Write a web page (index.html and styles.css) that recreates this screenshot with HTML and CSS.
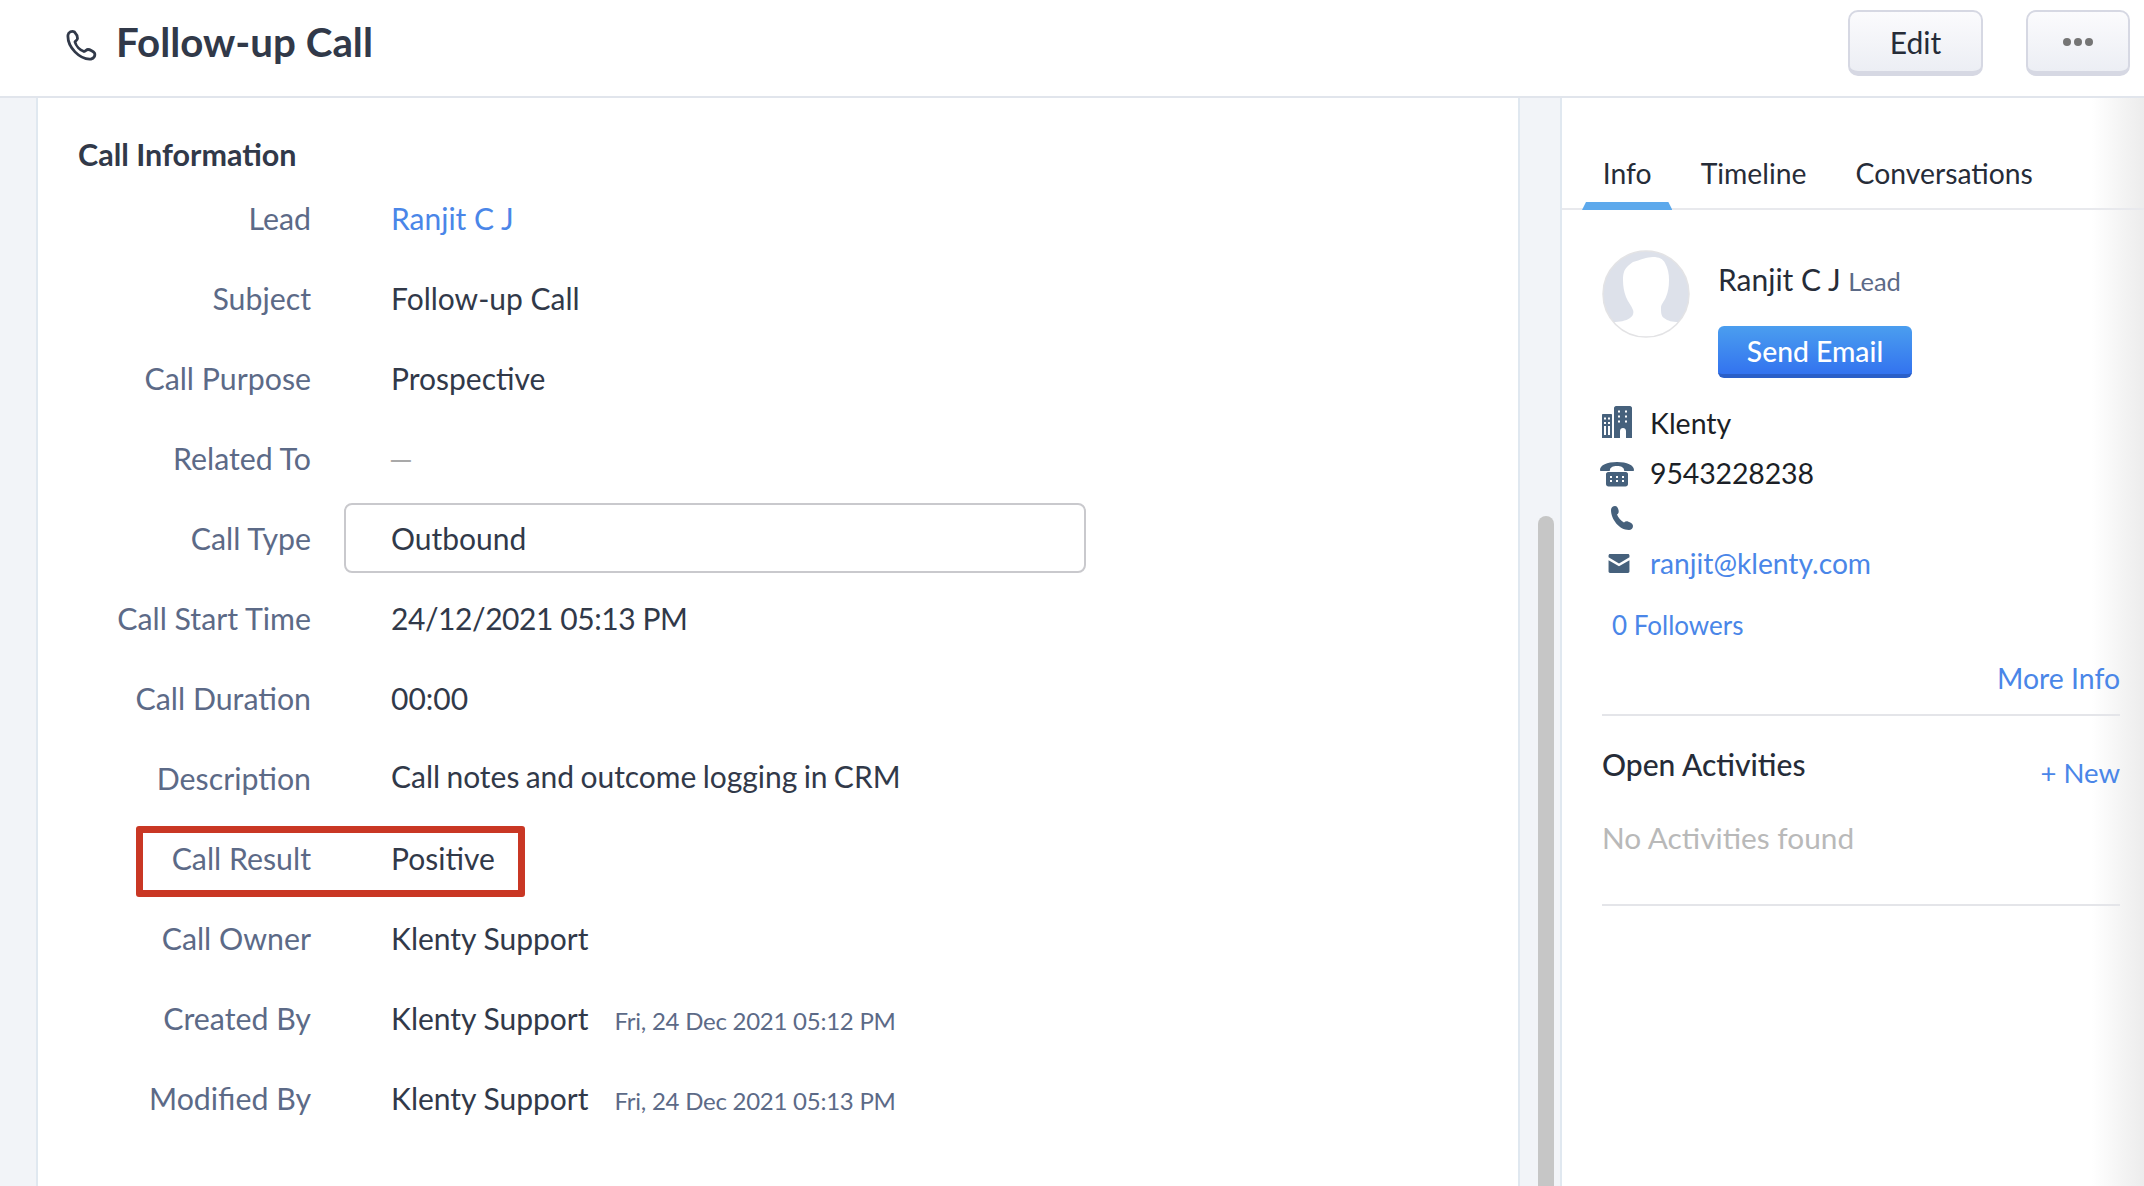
FILE: index.html
```html
<!DOCTYPE html>
<html lang="en">
<head>
<meta charset="utf-8">
<title>Follow-up Call</title>
<link rel="stylesheet" href="styles.css">
</head>
<body>
<header class="topbar">
  <div class="title-wrap">
    <svg class="title-icon" viewBox="0 0 32 32" aria-hidden="true"><path d="M3 6C3.500 3 7 1.500 9.500 3C11 4.500 12.500 8 12.500 9.500C12.500 11 10.500 12 10 13C11 17 15 21 19 22.500C20.500 22 21.500 20.500 23 20.500C25 20.500 28.500 22.500 29.500 24C30.500 26.500 29 29.500 26 30C15 31 2 18 3 6Z"/></svg>
    <h1 class="title">Follow-up Call</h1>
  </div>
  <div class="actions">
    <button class="btn btn-edit">Edit</button>
    <button class="btn btn-more" aria-label="More"><span class="dot"></span><span class="dot"></span><span class="dot"></span></button>
  </div>
</header>
<div class="content">
  <div class="gutter-left"></div>
  <main class="card">
    <h2 class="section-title">Call Information</h2>
    <div class="row"><div class="label">Lead</div><div class="value"><a class="link">Ranjit C J</a></div></div>
    <div class="row"><div class="label">Subject</div><div class="value">Follow-up Call</div></div>
    <div class="row"><div class="label">Call Purpose</div><div class="value">Prospective</div></div>
    <div class="row"><div class="label">Related To</div><div class="value value-empty">—</div></div>
    <div class="row"><div class="label">Call Type</div><div class="value value-box">Outbound</div></div>
    <div class="row"><div class="label">Call Start Time</div><div class="value value-num">24/12/2021 05:13 PM</div></div>
    <div class="row"><div class="label">Call Duration</div><div class="value">00:00</div></div>
    <div class="row"><div class="label">Description</div><div class="value value-raised">Call notes and outcome logging in CRM</div></div>
    <div class="row row-marked"><div class="label">Call Result</div><div class="value">Positive</div><div class="marker"></div></div>
    <div class="row"><div class="label">Call Owner</div><div class="value">Klenty Support</div></div>
    <div class="row"><div class="label">Created By</div><div class="value">Klenty Support<span class="stamp">Fri, 24 Dec 2021 05:12 PM</span></div></div>
    <div class="row"><div class="label">Modified By</div><div class="value">Klenty Support<span class="stamp">Fri, 24 Dec 2021 05:13 PM</span></div></div>
  </main>
  <div class="gutter-mid"><div class="scroll-thumb"></div></div>
  <aside class="side">
    <nav class="tabs">
      <a class="tab tab-active">Info</a>
      <a class="tab">Timeline</a>
      <a class="tab">Conversations</a>
    </nav>
    <section class="profile">
      <svg class="avatar" viewBox="0 0 88 88" aria-hidden="true">
        <circle cx="44" cy="44" r="43" fill="#dde1ea"/>
        <path fill="#fff" d="M31 12C38 10 45 7 51 7C57 7 61 9 63 13C66 18 67 24 67 30C67 37 66 42 64 47C62 52 59 54 59 58C59 62 59 66 62 68C66 71 70 72 76.600 72A43 43 0 0 1 11.400 72C17 72 24 71 28 68C31 66 32 63 31 60C29 55 26 52 24 47C22 42 21 36 21 30C21 24 22 20 25 17C27 15 29 13 31 12Z"/>
        <circle cx="44" cy="44" r="43" fill="none" stroke="#e3e3e5" stroke-width="1.500"/>
      </svg>
      <div class="profile-body">
        <div class="name">Ranjit C J <span class="name-tag">Lead</span></div>
        <button class="btn-primary">Send Email</button>
      </div>
    </section>
    <ul class="contacts">
      <li class="contact contact-first">
        <span class="icon-slot"><svg class="icon icon-building" viewBox="0 0 30 32" aria-hidden="true"><path d="M0 9c0-.6.400-1 1-1h8c.6 0 1 .4 1 1v23H0zM12 2c0-1 1-2 2-2h14c1 0 2 1 2 2v30h-6V25c0-1.700-1.300-3-3-3s-3 1.300-3 3v7h-6z"/><path fill="#fff" d="M2 11.500h2v2H2zM6 11.500h2v2H6zM2 16h2v2H2zM6 16h2v2H6zM2 20h2v9H2zM6 20h2v9H6zM16 4.500h2v2h-2zM23 4.500h2v2h-2zM16 9.500h2v2h-2zM23 9.500h2v2h-2zM16 14.500h2v2h-2zM23 14.500h2v2h-2z"/></svg></span>
        <span>Klenty</span>
      </li>
      <li class="contact">
        <span class="icon-slot"><svg class="icon icon-landline" viewBox="0 0 34 25" aria-hidden="true"><path d="M0 8C0 3 7 0 17 0S34 3 34 8c0 .6-.4 1-1 1h-8c-.6 0-1-.4-1-1 0-2.500-3-4-7-4s-7 1.500-7 4c0 .6-.4 1-1 1H1C.4 9 0 8.600 0 8z"/><path fill-rule="evenodd" d="M8 10h18c1 0 2 1 2 2v10c0 1.500-1 2.500-2.500 2.500h-17C7 24.500 6 23.500 6 22V12c0-1 1-2 2-2zM10 14v2h2v-2zM16 14v2h2v-2zM22 14v2h2v-2zM10 18v2h2v-2zM16 18v2h2v-2zM22 18v2h2v-2z"/></svg></span>
        <span class="digits">9543228238</span>
      </li>
      <li class="contact">
        <span class="icon-slot"><svg class="icon icon-phone" viewBox="0 0 24 24" aria-hidden="true"><path d="M1 4C1 1.500 3 0 5 0C7 0 8 2 8.500 4C9 6 8.500 7.500 7 8.500C8 11.500 11 15 14 16.500C15 15.500 16.500 15 18 15.500C20.500 16.500 23 17.500 23 20C23 22.500 21 24 19 24C9 24 1 13 1 4Z"/></svg></span>
      </li>
      <li class="contact">
        <span class="icon-slot"><svg class="icon icon-mail" viewBox="0 0 22 20" aria-hidden="true"><path d="M1.500 0h19C21.300 0 22 .7 22 1.500v2L11 10 0 3.500v-2C0 .7.700 0 1.500 0zM0 6.500l11 6.500 11-6.500v12c0 .8-.7 1.500-1.500 1.500h-19C.7 20 0 19.300 0 18.500z"/></svg></span>
        <a class="link link-mail">ranjit@klenty.com</a>
      </li>
    </ul>
    <a class="link followers">0 Followers</a>
    <div class="more-info"><a class="link">More Info</a></div>
    <section class="activities">
      <div class="activities-head">
        <h3 class="activities-title">Open Activities</h3>
        <a class="link new-link">+ New</a>
      </div>
      <p class="empty">No Activities found</p>
    </section>
  </aside>
</div>
</body>
</html>
```
FILE: styles.css
```css
* { box-sizing: border-box; }
html, body { margin: 0; height: 100%; }
body {
  width: 2144px;
  height: 1186px;
  overflow: hidden;
  background: #fff;
  color: #313949;
  font-family: Lato, "Open Sans", sans-serif;
  font-size: 30px;
}
.topbar {
  height: 98px;
  border-bottom: 2px solid #e1e5ec;
  display: flex;
  align-items: flex-start;
  justify-content: space-between;
  padding: 10px 14px 0 65px;
}
.title-wrap { display: flex; align-items: center; height: 64px; }
.title-icon {
  width: 32px;
  height: 32px;
  margin-top: 6px;
  fill: none;
  stroke: #313949;
  stroke-width: 2.800;
  stroke-linejoin: round;
}
.title {
  margin: 0 0 0 19px;
  font-size: 40.300px;
  font-weight: 700;
  line-height: 60px;
  color: #313949;
}
.actions { display: flex; gap: 43px; }
.btn {
  height: 66px;
  border: 2px solid #d6d8e3;
  border-bottom-width: 5px;
  border-radius: 10px;
  background: linear-gradient(#fbfbfd, #eceef4);
  font-family: inherit;
  font-size: 30px;
  color: #262c38;
  padding: 0;
}
.btn-edit { width: 135px; }
.btn-more {
  width: 104px;
  display: flex;
  align-items: center;
  justify-content: center;
  gap: 3px;
}
.dot { width: 8px; height: 8px; border-radius: 50%; background: #757575; }
.content { display: flex; height: 1088px; }
.gutter-left {
  width: 38px;
  background: #f2f4f8;
  border-right: 2px solid #e0e8f0;
}
.card { width: 1480px; padding-top: 38px; }
.section-title {
  margin: 0 0 5px 40px;
  font-size: 30.500px;
  line-height: 36px;
  padding-bottom: 2px;
  font-weight: 700;
  color: #313949;
}
.row {
  position: relative;
  height: 80px;
  padding-bottom: 2px;
  display: grid;
  grid-template-columns: 273px 1fr;
  column-gap: 33px;
  align-items: center;
}
.label { text-align: right; color: #5c6a87; font-size: 30.300px; }
.value { padding-left: 47px; color: #313949; }
.value-empty { color: #a9a9a9; margin-left: -2px; }
.value-num { letter-spacing: -0.430px; }
.value-raised { position: relative; top: -2px; word-spacing: -1.400px; }
.value-box {
  width: 742px;
  height: 70px;
  padding-left: 45px;
  border: 2px solid #c9c9cd;
  border-radius: 8px;
  display: flex;
  align-items: center;
}
.stamp { margin-left: 26px; font-size: 24px; letter-spacing: -0.250px; color: #5c6a87; }
.link { color: #4a86e8; text-decoration: none; }
.marker {
  position: absolute;
  left: 98px;
  top: 7px;
  width: 389px;
  height: 71px;
  border: 7px solid #c93724;
  border-radius: 3px;
}
.gutter-mid {
  width: 44px;
  background: #f2f4f8;
  border-left: 2px solid #e0e8f0;
  border-right: 2px solid #e0e8f0;
  padding: 418px 0 0 18px;
}
.scroll-thumb {
  width: 16px;
  height: 100%;
  border-radius: 8px 8px 0 0;
  background: #c6c6c6;
}
.side {
  width: 582px;
  padding-left: 40px;
  padding-right: 24px;
  background: linear-gradient(to right, #fff 0, #fff 91%, #ececec 100%);
}
.tabs {
  display: flex;
  gap: 7.500px;
  height: 112px;
  margin: 0 -24px 0 -40px;
  padding: 52px 0 0 20px;
  border-bottom: 2px solid #e8e9ed;
}
.tab {
  position: relative;
  height: 60px;
  padding: 0 20.800px;
  font-size: 28.300px;
  line-height: 46px;
  color: #262c38;
}
.tab-active::after {
  content: "";
  position: absolute;
  left: 0;
  right: 0;
  bottom: 0;
  height: 8px;
  background: #5da9ec;
  clip-path: polygon(4px 0, calc(100% - 4px) 0, 100% 100%, 0 100%);
}
.profile { display: flex; gap: 28px; margin-top: 40px; }
.avatar { width: 88px; height: 88px; flex: none; }
.name { height: 60px; line-height: 58px; color: #262c38; }
.name-tag { font-size: 25.500px; color: #5c6a87; }
.profile-body { display: flex; flex-direction: column; align-items: flex-start; gap: 16px; }
.btn-primary {
  width: 194px;
  height: 52px;
  padding: 2px 0 0;
  border: 0;
  border-bottom: 4px solid #2a5fc8;
  border-radius: 6px;
  background: linear-gradient(#4b9eef, #3373ef);
  color: #fff;
  font-family: inherit;
  font-size: 28.300px;
  font-weight: 500;
}
.contacts { list-style: none; margin: 22px 0 0; padding: 0; }
.contact {
  display: flex;
  align-items: center;
  height: 45px;
  color: #1b1f27;
  font-size: 28.500px;
}
.contact-first { margin-bottom: 5px; }
.icon-slot { width: 48px; flex: none; display: flex; align-items: center; }
.icon { fill: #46617c; flex: none; display: block; }
.icon-building { width: 30px; height: 32px; margin-bottom: 2px; }
.icon-landline { width: 34px; height: 25px; margin: 3px 0 0 -2px; }
.icon-phone { width: 24px; height: 24px; margin-left: 8px; }
.icon-mail { width: 22px; height: 19px; margin: 2px 0 0 6px; }
.digits { letter-spacing: -0.150px; }
.link-mail { font-size: 28.200px; }
.followers { display: block; margin: 22px 0 0 10px; line-height: 36px; font-size: 26px; }
.more-info { margin-top: 17px; text-align: right; line-height: 36px; font-size: 28.400px; }
.activities { margin-top: 18px; border-top: 2px solid #e4e5e9; border-bottom: 2px solid #e4e5e9; height: 192px; }
.activities-head { display: flex; justify-content: space-between; align-items: flex-start; padding-top: 30px; }
.activities-title { margin: 0; font-size: 30px; line-height: 36px; font-weight: 500; color: #262c38; }
.new-link { margin-top: 9px; font-size: 27.500px; line-height: 36px; }
.empty { margin: 29px 0 0; font-size: 29.800px; line-height: 36px; color: #b9b9b9; }
```
